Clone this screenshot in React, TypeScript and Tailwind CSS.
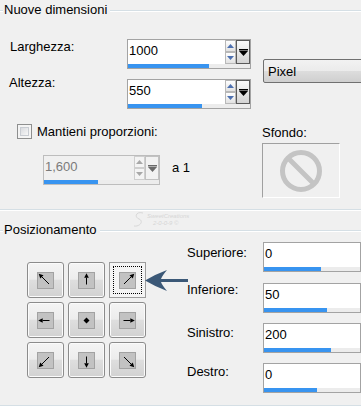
import React from "react";

type Dir = [number, number];

function Etched({ className = "" }: { className?: string }) {
  return <div className={`h-[2px] border-t border-[#d5dfe5] bg-white ${className}`} />;
}

function GroupHeader({ title }: { title: string }) {
  return (
    <div className="flex h-[20px] items-start">
      <Etched className="mt-[10px] w-[3px]" />
      <span className="mt-[2px] px-px leading-[15px] text-black">{title}</span>
      <Etched className="ml-[2px] mt-[10px] flex-1" />
    </div>
  );
}

function Tri({ up, color }: { up: boolean; color: string }) {
  return (
    <svg width="7" height="4" viewBox="0 0 7 4">
      <polygon points={up ? "0,4 7,4 3.5,0" : "0,0 7,0 3.5,4"} fill={color} />
    </svg>
  );
}

function SpinButtons({ disabled }: { disabled: boolean }) {
  const arrow = disabled ? "#a8a8a8" : "#4d70b0";
  const box = disabled
    ? "border-[#cfcfcf] bg-[#f4f4f4]"
    : "border-[#b8b8b8] bg-gradient-to-b from-white to-[#e2e2e2]";
  return (
    <div className="flex w-[11px] shrink-0 flex-col">
      <div className={`flex h-[12px] items-center justify-center border ${box}`}>
        <Tri up color={arrow} />
      </div>
      <div className={`flex h-[12px] items-center justify-center border ${box}`}>
        <Tri up={false} color={arrow} />
      </div>
    </div>
  );
}

function DropButton({ disabled }: { disabled: boolean }) {
  const c = disabled ? "#6a6a6a" : "#000";
  return (
    <div
      className={`flex w-[14px] shrink-0 items-center justify-center border ${
        disabled ? "border-[#c2c2c2] bg-[#f2f2f2]" : "border-[#5a5a5a] bg-gradient-to-b from-[#fafafa] to-[#d4d4d4]"
      }`}
    >
      <svg width="9" height="7" viewBox="0 0 9 7">
        <rect x="0" y="0" width="9" height="1.5" fill={c} />
        <polygon points="0,2 9,2 4.5,7" fill={c} />
      </svg>
    </div>
  );
}

function ValueField({
  value,
  bar,
  spin = false,
  disabled = false,
  className = "",
}: {
  value: string;
  bar: number;
  spin?: boolean;
  disabled?: boolean;
  className?: string;
}) {
  return (
    <div
      className={`flex h-[30px] shrink-0 flex-col border ${
        disabled ? "border-[#bdbdbd] bg-[#f0f0f0]" : "border-[#a3a3a3] bg-white"
      } ${className}`}
    >
      <div className="flex h-[24px]">
        <div
          className={`flex-1 pl-px pt-[3px] text-[13px] leading-[15px] ${
            disabled ? "text-[#7a7a7a]" : "text-black"
          }`}
        >
          {value}
        </div>
        {spin && <SpinButtons disabled={disabled} />}
        {spin && <DropButton disabled={disabled} />}
      </div>
      <div className="flex h-[4px] bg-[#ececec]">
        <div className="h-full bg-[#3894f0]" style={{ width: bar }} />
      </div>
    </div>
  );
}

function Checkbox() {
  return (
    <div className="flex h-[15px] w-[15px] shrink-0 border border-[#8e8f8f] bg-[#f4f4f4] p-[2px]">
      <div className="flex-1 border border-[#c8ccd2] bg-gradient-to-br from-[#d9dbdf] to-[#f7f7f7]" />
    </div>
  );
}

function DirIcon({ d }: { d: Dir }) {
  const [dx, dy] = d;
  const c = 8.5;
  let shape: React.ReactNode;
  if (dx === 0 && dy === 0) {
    shape = <polygon points="8.5,5.5 11.5,8.5 8.5,11.5 5.5,8.5" fill="#000" />;
  } else {
    const diag = dx !== 0 && dy !== 0;
    const reach = diag ? 6.8 : 7.3;
    const back = diag ? 3.5 : 4;
    const tip = [c + dx * reach, c + dy * reach];
    const tail = [c - dx * back, c - dy * back];
    const len = Math.hypot(dx, dy);
    const ux = dx / len;
    const uy = dy / len;
    const hb = [tip[0] - ux * 4.5, tip[1] - uy * 4.5];
    const px = -uy * 2.3;
    const py = ux * 2.3;
    shape = (
      <>
        <line x1={tail[0]} y1={tail[1]} x2={hb[0]} y2={hb[1]} stroke="#000" strokeWidth="1" />
        <polygon
          points={`${tip[0]},${tip[1]} ${hb[0] + px},${hb[1] + py} ${hb[0] - px},${hb[1] - py}`}
          fill="#000"
        />
      </>
    );
  }
  return (
    <svg width="17" height="17" viewBox="0 0 17 17">
      <rect x="0.5" y="0.5" width="16" height="16" fill="#c2c2c2" stroke="#a2a2a2" />
      {shape}
    </svg>
  );
}

function PosButton({ d, selected = false }: { d: Dir; selected?: boolean }) {
  if (selected) {
    return (
      <div className="flex h-[36px] w-[37px] border border-[#9c9c9c] bg-[#f4f4f4] p-[3px]">
        <div className="flex flex-1 items-center justify-center border border-dotted border-black">
          <DirIcon d={d} />
        </div>
      </div>
    );
  }
  return (
    <div className="flex h-[36px] w-[37px] items-center justify-center rounded-[3px] border border-[#8c8c8c] bg-[linear-gradient(to_bottom,#f4f4f4_0%,#ececec_48%,#dedede_50%,#d2d2d2_100%)] shadow-[inset_0_0_0_1px_#fbfbfb]">
      <DirIcon d={d} />
    </div>
  );
}

const dirs: Dir[] = [
  [-1, -1],
  [0, -1],
  [1, -1],
  [-1, 0],
  [0, 0],
  [1, 0],
  [-1, 1],
  [0, 1],
  [1, 1],
];

const margins = [
  { label: "Superiore:", value: "0", bar: 57, row: "mt-[2px]", lab: "pt-[3px]" },
  { label: "Inferiore:", value: "50", bar: 63, row: "mt-[11px]", lab: "-mt-px" },
  { label: "Sinistro:", value: "200", bar: 67, row: "mt-[10px]", lab: "pt-[2px]" },
  { label: "Destro:", value: "0", bar: 53, row: "mt-[10px]", lab: "pt-[1px]" },
];

export default function App() {
  return (
    <div className="relative h-[406px] w-[361px] overflow-hidden bg-[#f0f0f0] font-['Liberation_Sans',Arial,sans-serif] text-[13px] text-black">
      {/* Nuove dimensioni */}
      <GroupHeader title="Nuove dimensioni" />
      <div className="flex h-[189px]">
        <div className="flex w-[262px] shrink-0 flex-col">
          <div className="mt-[19px] flex items-start">
            <div className="w-[127px] shrink-0 pl-[10px] leading-[15px]">Larghezza:</div>
            <ValueField value="1000" bar={81} spin className="w-[124px]" />
          </div>
          <div className="mt-[10px] flex items-start">
            <div className="-mt-[4px] w-[127px] shrink-0 pl-[9px] leading-[15px]">Altezza:</div>
            <ValueField value="550" bar={74} spin className="w-[124px]" />
          </div>
          <div className="mt-[15px] flex items-start pl-[17px]">
            <Checkbox />
            <span className="ml-[5px] leading-[15px]">Mantieni proporzioni:</span>
          </div>
          <div className="mt-[16px] flex items-start pl-[43px]">
            <ValueField value="1,600" bar={54} spin disabled className="w-[117px]" />
            <span className="ml-[12px] mt-[5px] leading-[15px]">a 1</span>
          </div>
        </div>
        <div className="flex min-w-0 flex-1 flex-col">
          <div className="ml-px mt-[39px] flex h-[24px] w-[110px] shrink-0 items-center rounded-[2px] border border-[#707070] bg-[linear-gradient(to_bottom,#f2f2f2_0%,#ebebeb_50%,#dddddd_50%,#cfcfcf_100%)] pl-[4px] leading-[15px]">
            Pixel
          </div>
          <div className="mt-[42px] leading-[15px]">Sfondo:</div>
          <div className="mt-[3px] flex h-[55px] w-[78px] items-center justify-center border border-b-white border-l-[#a0a0a0] border-r-white border-t-[#a0a0a0]">
            <svg width="46" height="46" viewBox="0 0 46 46">
              <circle cx="23" cy="23" r="18.5" fill="none" stroke="#c4c4c4" strokeWidth="5" />
              <line x1="10" y1="10" x2="36" y2="36" stroke="#c4c4c4" strokeWidth="5" />
            </svg>
          </div>
        </div>
      </div>
      <Etched />

      {/* Posizionamento */}
      <div className="mt-[9px]">
        <GroupHeader title="Posizionamento" />
      </div>
      <div className="flex h-[165px]">
        <div className="w-[187px] shrink-0 pl-[27px] pt-[22px]">
          <div className="grid grid-cols-[repeat(3,37px)] gap-x-[4px] gap-y-[4px]">
            {dirs.map((d, i) => (
              <PosButton key={i} d={d} selected={i === 2} />
            ))}
          </div>
        </div>
        <div className="flex min-w-0 flex-1 flex-col">
          {margins.map((m) => (
            <div key={m.label} className={`flex items-start ${m.row}`}>
              <div className={`w-[76px] shrink-0 leading-[15px] ${m.lab}`}>{m.label}</div>
              <ValueField value={m.value} bar={m.bar} className="w-[98px]" />
            </div>
          ))}
        </div>
      </div>
      <div className="h-px bg-[#d5dfe5]" />

      {/* watermark */}
      <div className="absolute left-[132px] top-[211px] flex items-center gap-[1px] text-[#d6d6d6]">
        <svg width="14" height="18" viewBox="0 0 14 18">
          <path d="M11 2 C4 0 2 6 7 8 C12 10 8 16 2 15" fill="none" stroke="#d8d8d8" strokeWidth="1" />
        </svg>
        <div className="flex flex-col text-[6px] leading-[7px] italic">
          <span>SweetCreations</span>
          <span className="pl-[6px]">2-0-0-9 ©</span>
        </div>
      </div>

      {/* callout arrow */}
      <svg className="absolute left-[140px] top-[266px]" width="52" height="30" viewBox="0 0 52 30">
        <path
          d="M5 14.5 Q16 8 27 4 Q22 10 21 13 L48 13 L48 16 L21 16 Q22 19 27 25 Q16 21 5 14.5 Z"
          fill="#3b5877"
        />
      </svg>
    </div>
  );
}
